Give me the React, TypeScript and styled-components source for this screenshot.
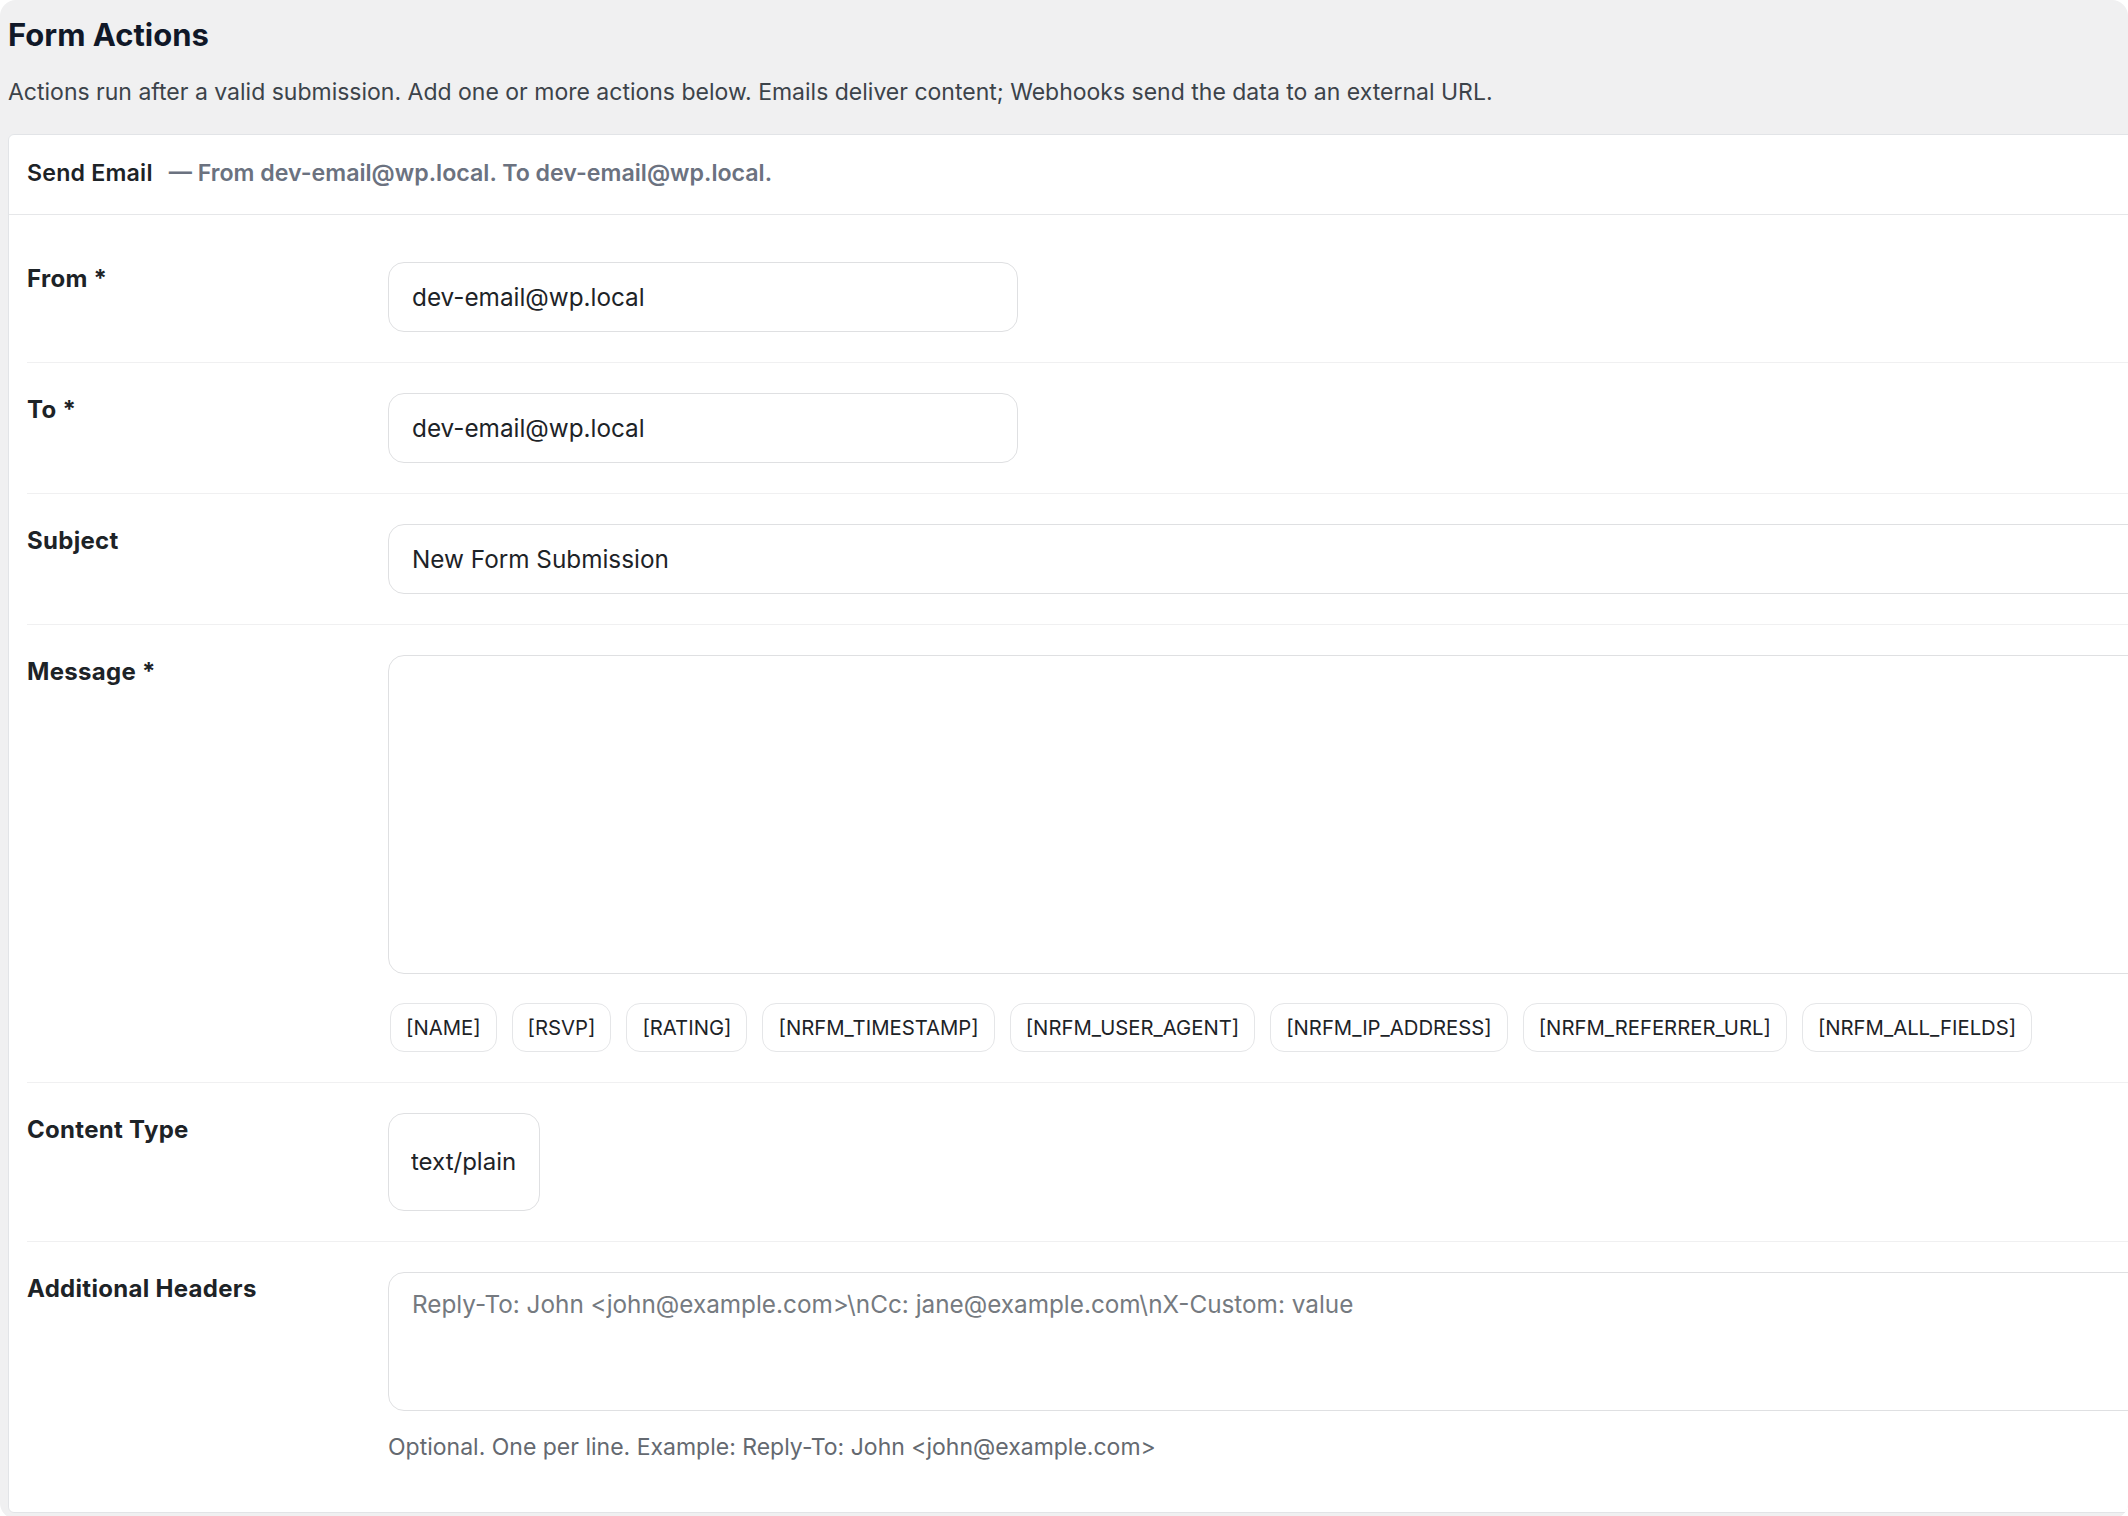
import * as React from 'react';
import styled, { createGlobalStyle } from 'styled-components';

const GlobalStyle = createGlobalStyle`
    * {
        box-sizing: border-box;
    }
    body {
        margin: 0;
        background: #ffffff;
        font-family: Inter, "Liberation Sans", sans-serif;
        color: #1d2327;
    }
`;

const tags = [
    '[NAME]',
    '[RSVP]',
    '[RATING]',
    '[NRFM_TIMESTAMP]',
    '[NRFM_USER_AGENT]',
    '[NRFM_IP_ADDRESS]',
    '[NRFM_REFERRER_URL]',
    '[NRFM_ALL_FIELDS]',
];

const App = () => {
    return (
        <>
            <GlobalStyle />
            <StyledWrapper>
                <StyledTitle>Form Actions</StyledTitle>
                <StyledIntro>
                    Actions run after a valid submission. Add one or more actions below. Emails deliver content;
                    Webhooks send the data to an external URL.
                </StyledIntro>
                <StyledCard>
                    <StyledCardHeader>
                        <StyledActionName>Send Email</StyledActionName>
                        <StyledSummary>— From dev-email@wp.local. To dev-email@wp.local.</StyledSummary>
                    </StyledCardHeader>
                    <StyledCardBody>
                        <StyledRow>
                            <StyledLabel htmlFor="nrfm-from">From *</StyledLabel>
                            <div>
                                <StyledInput id="nrfm-from" $narrow defaultValue="dev-email@wp.local" />
                            </div>
                        </StyledRow>
                        <StyledRow>
                            <StyledLabel htmlFor="nrfm-to">To *</StyledLabel>
                            <div>
                                <StyledInput id="nrfm-to" $narrow defaultValue="dev-email@wp.local" />
                            </div>
                        </StyledRow>
                        <StyledRow>
                            <StyledLabel htmlFor="nrfm-subject">Subject</StyledLabel>
                            <div>
                                <StyledInput id="nrfm-subject" defaultValue="New Form Submission" />
                            </div>
                        </StyledRow>
                        <StyledRow>
                            <StyledLabel htmlFor="nrfm-message">Message *</StyledLabel>
                            <div>
                                <StyledTextarea id="nrfm-message" $height={319} />
                                <StyledTags>
                                    {tags.map((tag) => (
                                        <StyledTag key={tag} type="button">
                                            {tag}
                                        </StyledTag>
                                    ))}
                                </StyledTags>
                            </div>
                        </StyledRow>
                        <StyledRow>
                            <StyledLabel htmlFor="nrfm-type">Content Type</StyledLabel>
                            <div>
                                <StyledSelect id="nrfm-type" defaultValue="text/plain">
                                    <option value="text/plain">text/plain</option>
                                    <option value="text/html">text/html</option>
                                </StyledSelect>
                            </div>
                        </StyledRow>
                        <StyledRow $last>
                            <StyledLabel htmlFor="nrfm-headers">Additional Headers</StyledLabel>
                            <div>
                                <StyledTextarea
                                    id="nrfm-headers"
                                    $height={139}
                                    $padTop={13}
                                    placeholder="Reply-To: John <john@example.com>\nCc: jane@example.com\nX-Custom: value"
                                />
                                <StyledHelp>Optional. One per line. Example: Reply-To: John &lt;john@example.com&gt;</StyledHelp>
                            </div>
                        </StyledRow>
                    </StyledCardBody>
                </StyledCard>
            </StyledWrapper>
        </>
    );
};

export default App;

const StyledWrapper = styled.div`
    min-height: 100vh;
    padding: 14px 8px 6px 8px;
    background: #f0f0f1;
    border-radius: 16px;
    overflow: hidden;
`;

const StyledTitle = styled.h1`
    margin: 0;
    font-size: 31px;
    line-height: 42px;
    font-weight: 700;
    color: #101828;
`;

const StyledIntro = styled.p`
    margin: 19px 0 24px;
    font-size: 23px;
    line-height: 1.5;
    color: #3c434a;
`;

const StyledCard = styled.div`
    margin-right: -40px;
    background: #ffffff;
    border: 1px solid #e2e4e7;
    border-radius: 6px;
`;

const StyledCardHeader = styled.div`
    display: flex;
    align-items: center;
    gap: 16px;
    height: 80px;
    padding: 0 18px 2px;
    border-bottom: 1px solid #e6e7e9;
    font-size: 23.2px;
    font-weight: 600;
`;

const StyledActionName = styled.span`
    color: #1d2327;
    letter-spacing: 0.2px;
`;

const StyledSummary = styled.span`
    color: #6b7280;
`;

const StyledCardBody = styled.div`
    padding: 17px 0 18px 18px;
`;

const StyledRow = styled.div<{ $last?: boolean }>`
    display: grid;
    grid-template-columns: 361px 1fr;
    padding: 30px 0;
    border-bottom: ${(props) => (props.$last ? 'none' : '1px solid #f0f0f1')};
`;

const StyledLabel = styled.label`
    font-size: 24px;
    line-height: 1.4;
    font-weight: 700;
    letter-spacing: 0.3px;
    color: #1d2327;
`;

const StyledInput = styled.input<{ $narrow?: boolean }>`
    display: block;
    width: ${(props) => (props.$narrow ? '630px' : '100%')};
    height: 70px;
    padding: 0 23px;
    border: 1px solid #dfe0e2;
    border-radius: 16px;
    background: #ffffff;
    font-family: inherit;
    font-size: 24.3px;
    color: #1d2327;
    outline: none;
`;

const StyledTextarea = styled.textarea<{ $height: number; $padTop?: number }>`
    display: block;
    width: 100%;
    height: ${(props) => props.$height}px;
    padding: ${(props) => props.$padTop ?? 11}px 23px 11px;
    border: 1px solid #dfe0e2;
    border-radius: 16px;
    background: #ffffff;
    font-family: inherit;
    font-size: 24.3px;
    line-height: 1.5;
    color: #1d2327;
    resize: none;
    outline: none;

    &::placeholder {
        color: #757a80;
    }
`;

const StyledTags = styled.div`
    display: flex;
    flex-wrap: wrap;
    gap: 15px;
    margin-top: 29px;
    padding-left: 2px;
`;

const StyledTag = styled.button`
    height: 49px;
    padding: 0 15px;
    border: 1px solid #e5e6e8;
    border-radius: 14px;
    background: #ffffff;
    font-family: inherit;
    font-size: 20.3px;
    color: #1d2327;
    cursor: pointer;
`;

const StyledSelect = styled.select`
    display: block;
    width: 152px;
    height: 98px;
    padding: 0 22px;
    border: 1px solid #dfe0e2;
    border-radius: 16px;
    background: #ffffff;
    font-family: inherit;
    font-size: 24px;
    color: #1d2327;
    appearance: none;
    outline: none;
`;

const StyledHelp = styled.p`
    margin: 19px 0 0;
    font-size: 23px;
    line-height: 1.5;
    color: #646970;
`;
